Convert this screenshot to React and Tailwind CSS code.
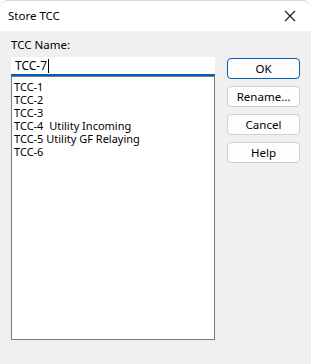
export default function App() {
  const items = ["TCC-1", "TCC-2", "TCC-3", "TCC-4  Utility Incoming", "TCC-5 Utility GF Relaying", "TCC-6"];
  const btn = "h-[21px] w-[73px] rounded-[4px] bg-[#fdfdfd] border border-[#d0d0d0] text-[11.5px] text-black flex items-center justify-center";
  return (
    <div className="w-[311px] h-[364px] bg-[#f0f0f0] flex flex-col overflow-hidden rounded-t-[8px] border-t border-[#d8d8d8]" style={{ fontFamily: '"Noto Sans", "Open Sans", sans-serif' }}>
      <div className="h-[30px] bg-white flex items-center justify-between pl-[8px] pr-[8px] shrink-0">
        <span className="text-[11.5px] text-black">Store TCC</span>
        <svg width="12" height="12" viewBox="0 0 12 12" className="mr-[7px]">
          <path d="M1 1 L11 11 M11 1 L1 11" stroke="#1a1a1a" strokeWidth="1.1" />
        </svg>
      </div>
      <div className="flex pl-[11px] pt-[6px]">
        <div className="flex flex-col w-[204px]">
          <div className="text-[11.5px] text-black leading-[15px] h-[20px]">TCC Name:</div>
          <div className="h-[19px] bg-white border-b-2 border-[#005fb8] flex items-center pl-[4px] text-[12px] text-black leading-none">
            TCC-7<span className="inline-block w-px h-[14px] bg-black ml-[1px]"></span>
          </div>
          <div className="h-[264px] bg-white border border-[#7a7a7a] pl-[2px] pt-[3px] flex flex-col text-[11px] text-black">
            {items.map((t) => (
              <div key={t} className="h-[13px] leading-[13px] whitespace-pre">{t}</div>
            ))}
          </div>
        </div>
        <div className="flex flex-col gap-[7px] ml-[12px] pt-[21px]">
          <div className="h-[21px] w-[73px] rounded-[4px] bg-[#fdfdfd] border-[1.5px] border-[#005fb8] text-[11.5px] text-black flex items-center justify-center">OK</div>
          <div className={btn}>Rename…</div>
          <div className={btn}>Cancel</div>
          <div className={btn}>Help</div>
        </div>
      </div>
    </div>
  );
}
